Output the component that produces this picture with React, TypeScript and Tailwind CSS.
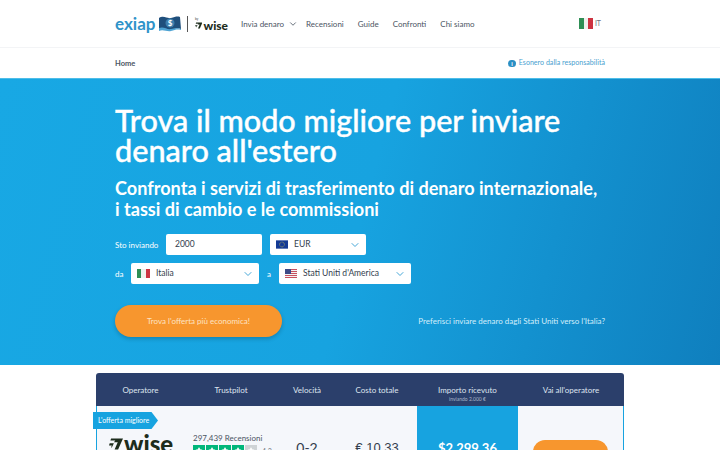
import { ChevronDown, Star } from 'lucide-react'

const navLinks = ['Recensioni', 'Guide', 'Confronti', 'Chi siamo']
const columns = [
  { label: 'Velocità', width: 'w-[60px]' },
  { label: 'Costo totale', width: 'w-[80px]' },
]

function ItalyFlag({ className }: { className: string }) {
  return (
    <span className={`flex shrink-0 ${className}`}>
      <span className="flex-1 bg-[#2f8f55]" />
      <span className="flex-1 bg-[#f1f1ee]" />
      <span className="flex-1 bg-[#cd3341]" />
    </span>
  )
}

function EuFlag() {
  return (
    <svg width="12" height="9" viewBox="0 0 13 9" className="shrink-0">
      <rect width="13" height="9" fill="#143a94" />
      <circle cx="6.5" cy="4.5" r="2.6" fill="none" stroke="#d9c84a" strokeWidth="0.7" strokeDasharray="0.8 0.55" />
    </svg>
  )
}

function UsFlag() {
  return (
    <svg width="12" height="9" viewBox="0 0 12 9" className="shrink-0">
      <rect width="12" height="9" fill="#f3f3f3" />
      {[0, 2, 4, 6, 8].map((y) => <rect key={y} y={y} width="12" height="1" fill="#c8505f" />)}
      <rect width="6" height="5" fill="#3d4a86" />
    </svg>
  )
}

// the Wise flag: a thick seven with a short bar on its left
function WiseMark({ className, color }: { className: string; color: string }) {
  return (
    <svg viewBox="0 0 20 16" className={className}>
      <path d="M3 0h17l-7 16H8l4.500-10.500H7L9 3H2z" fill={color} />
      <path d="M1 7h6L4 13H3l1-3H0z" fill={color} />
    </svg>
  )
}

function Select({ children, width }: { children: React.ReactNode; width: string }) {
  return (
    <div className={`h-[21px] bg-white rounded-[2px] flex items-center pl-[6px] pr-[5px] gap-[6px] text-[#333d4d] text-[8.5px] ${width}`}>
      {children}
      <ChevronDown size={12} strokeWidth={2} className="ml-auto text-[#45a7d8]" />
    </div>
  )
}

export default function App() {
  return (
    <div className="w-[720px] h-[450px] overflow-hidden bg-white font-['Lato','Liberation_Sans',sans-serif]">
      <header className="h-[48px] border-b border-[#f3f4f6]">
        <div className="w-[490px] mx-auto h-full flex items-center">
          <span className="text-[17px] font-bold text-[#2f93c9] leading-none -mt-[1px] w-[40px]">exiap</span>
          <svg width="24" height="17" viewBox="0 0 24 17" className="ml-[3px]">
            <path d="M1 3c5-3 8 1 12 0s6-2 9-1l1 12c-4-1-6 0-10 1s-8-2-12 0z" fill="#1f4f7c" />
            <path d="M1 13c5-2 8 2 12 1s6-1 10 0v1c-4-1-6 0-10 1s-8-2-12 0z" fill="#4ea3d3" />
            <circle cx="12" cy="8" r="4.500" fill="#3d7fae" />
            <text x="12" y="11" textAnchor="middle" fontSize="8" fontWeight="700" fill="#fff">$</text>
          </svg>
          <span className="w-px h-[16px] bg-[#555] ml-[5px]" />
          <div className="ml-[7px] w-[33px] flex flex-col">
            <span className="text-[3px] leading-[3px] text-[#333]">by</span>
            <div className="flex items-center gap-[1px]">
              <WiseMark className="w-[8px] h-[7px]" color="#1d2c1c" />
              <span className="text-[12px] leading-[9px] font-black text-[#1d2c1c]">wise</span>
            </div>
          </div>
          <nav className="ml-[13px] flex items-center text-[8px] text-[#4b5563]">
            <span>Invia denaro</span>
            <ChevronDown size={10} strokeWidth={2} className="ml-[4px] text-[#4b5563]" />
            <div className="ml-[8px] flex gap-[14px]">
              {navLinks.map((link) => <span key={link}>{link}</span>)}
            </div>
          </nav>
          <div className="ml-auto mr-[4px] flex items-center gap-[2px] text-[7px] text-[#6b7280]">
            <ItalyFlag className="w-[14px] h-[11px]" />
            <span>IT</span>
          </div>
        </div>
      </header>

      <div className="h-[30px]">
        <div className="w-[490px] mx-auto h-full flex items-center justify-between pt-[1px]">
          <span className="text-[7.5px] font-bold text-[#4b5563]">Home</span>
          <span className="flex items-center gap-[3px] text-[7.1px] text-[#4a9fd0]">
            <span className="w-[7.5px] h-[7.5px] rounded-full bg-[#2a8fc4] text-white text-[6px] leading-[7.5px] font-bold text-center">i</span>
            Esonero dalla responsabilità
          </span>
        </div>
      </div>

      <section className="h-[287px] bg-[linear-gradient(105deg,#18a8e4_0%,#17a3e0_50%,#0f7fbe_100%)] border-t border-[#4dbde8]">
        <div className="w-[490px] mx-auto pt-[27px]">
          <h1 className="text-[30.600px] leading-[30px] font-medium text-white [-webkit-text-stroke:0.4px_white]">Trova il modo migliore per inviare<br />denaro all'estero</h1>
          <h2 className="mt-[12px] text-[18.100px] leading-[21px] font-bold text-white whitespace-nowrap">Confronta i servizi di trasferimento di denaro internazionale,<br />i tassi di cambio e le commissioni</h2>
          <div className="mt-[14px] flex items-center text-[8px] text-white">
            <span className="w-[51px]">Sto inviando</span>
            <div className="w-[96px] h-[21px] bg-white rounded-[2px] flex items-center pl-[9px] text-[8.5px] text-[#333d4d]">2000</div>
            <div className="ml-[8px]">
              <Select width="w-[96px]"><EuFlag /><span>EUR</span></Select>
            </div>
          </div>
          <div className="mt-[8px] flex items-center text-[8px] text-white">
            <span className="w-[16px]">da</span>
            <Select width="w-[128px]"><ItalyFlag className="w-[13px] h-[9px]" /><span>Italia</span></Select>
            <span className="w-[12px] ml-[8px]">a</span>
            <Select width="w-[132px]"><UsFlag /><span>Stati Uniti d'America</span></Select>
          </div>
          <div className="mt-[21px] flex items-center justify-between">
            <div className="w-[167px] h-[32px] rounded-full bg-[#f7962e] shadow-[0_2px_4px_rgba(0,0,0,0.2)] flex items-center justify-center text-[8px] text-[#fde3c4]">
              Trova l'offerta più economica!
            </div>
            <span className="text-[8px] text-[#d3eefb]">Preferisci inviare denaro dagli Stati Uniti verso l'Italia?</span>
          </div>
        </div>
      </section>

      <div className="w-[528px] mx-auto mt-[8px] relative">
        <div className="h-[33px] bg-[#2b3f6b] rounded-t-[3px] flex items-center text-[8px] text-[#dfe5ef] text-center">
          <span className="w-[89px]">Operatore</span>
          <span className="w-[92px]">Trustpilot</span>
          {columns.map((c) => <span key={c.label} className={c.width}>{c.label}</span>)}
          <div className="w-[101px] flex flex-col pt-[6px]">
            <span>Importo ricevuto</span>
            <span className="text-[5px] leading-[6px] text-[#a9b4c9]">inviando 2.000 €</span>
          </div>
          <span className="flex-1">Vai all'operatore</span>
        </div>
        <div className="h-[60px] bg-[#f5f7fb] border-x border-[#17a3e0] flex">
          <div className="w-[88px] pt-[30px] pl-[12px]">
            <div className="flex items-center gap-[1px]">
              <WiseMark className="w-[14px] h-[12px]" color="#1d2c1c" />
              <span className="text-[24px] leading-[16px] font-black text-[#1d2c1c]">wise</span>
            </div>
          </div>
          <div className="w-[92px] pt-[27px] pl-[8px]">
            <div className="text-[8px] leading-[11px] text-[#4b5563]">297,439 Recensioni</div>
            <div className="flex items-center gap-[1px] mt-[1px]">
              {[0, 1, 2, 3].map((i) => (
                <span key={i} className="w-[12px] h-[12px] bg-[#00b67a] flex items-center justify-center">
                  <Star size={8} className="text-white fill-white" />
                </span>
              ))}
              <span className="w-[12px] h-[12px] bg-[#cfd3d6] flex items-center justify-center">
                <Star size={8} className="text-white fill-white" />
              </span>
              <span className="ml-[4px] text-[7px] text-[#6b7280]">4.3</span>
            </div>
          </div>
          <div className="w-[60px] pt-[33px] text-center text-[14px] leading-[18px] text-[#333d4d]">0-2</div>
          <div className="w-[80px] pt-[33px] text-center text-[13px] leading-[18px] font-['Liberation_Sans',sans-serif] text-[#333d4d]">€ 10,33</div>
          <div className="w-[101px] bg-[#17a3e0] pt-[33px] text-center text-[13px] leading-[18px] font-bold text-white">$2.299,36</div>
          <div className="flex-1 flex justify-center pt-[34px]">
            <div className="w-[75px] h-[32px] rounded-[12px] bg-[#f7962e]" />
          </div>
        </div>
        <div className="absolute left-[-3px] top-[39px] h-[17px] w-[65px] bg-[#17a3e0] text-white text-[7px] leading-[17px] pl-[5px] [clip-path:polygon(0_0,90%_0,100%_50%,90%_100%,0_100%)]">
          L'offerta migliore
        </div>
      </div>
    </div>
  )
}
